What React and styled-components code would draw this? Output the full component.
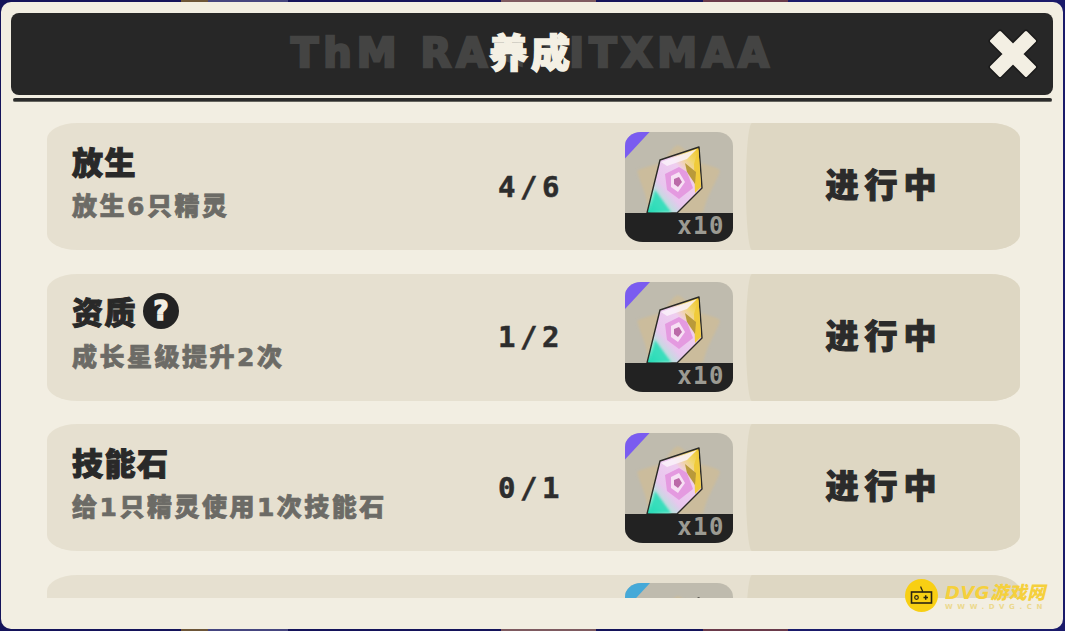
import React from "react";
import styled, { createGlobalStyle } from "styled-components";

const GlobalStyle = createGlobalStyle`
  html, body {
    margin: 0;
    height: 100%;
    overflow: hidden;
    background: #17165e;
  }
`;

const FONT = `"DejaVu Sans", "Noto Sans CJK SC", sans-serif`;
const MONO = `"DejaVu Sans Mono", monospace`;

const Page = styled.div`
  height: 631px;
  padding: 2px 2px 2px 1px;
  box-sizing: border-box;
  background: linear-gradient(
    90deg,
    #14135a 0 17%,
    #6d5638 17% 19.5%,
    #45457f 19.5% 27%,
    #14135a 27% 47%,
    #7e5a60 47% 56%,
    #14135a 56% 66%,
    #6a3a4a 66% 74%,
    #1a1a6a 74% 100%
  );
  font-family: ${FONT};
`;

const Panel = styled.div`
  position: relative;
  height: 627px;
  box-sizing: border-box;
  padding-top: 11px;
  display: flex;
  flex-direction: column;
  background: #f2eee2;
  border-radius: 10px;
  overflow: hidden;
`;

const Header = styled.div`
  position: relative;
  height: 82px;
  margin: 0 10px;
  flex: none;
  display: grid;
  grid-template-columns: 1fr auto 1fr;
  align-items: center;
  background: #272727;
  border-radius: 8px;
`;

const Runes = styled.div`
  position: absolute;
  top: 17px;
  left: 280px;
  width: 482px;
  text-align: center;
  font-size: 40px;
  line-height: 46px;
  font-weight: 700;
  letter-spacing: 5px;
  white-space: nowrap;
  color: #444443;
  -webkit-text-stroke: 2.5px #444443;
`;

const Title = styled.h1`
  position: relative;
  grid-column: 2;
  margin: 0 0 0 -2px;
  font-size: 39px;
  line-height: 82px;
  font-weight: 900;
  letter-spacing: 3px;
  color: #f4f0e4;
  -webkit-text-stroke: 1.5px #f4f0e4;
`;

const Close = styled.button`
  grid-column: 3;
  justify-self: end;
  width: 50px;
  height: 50px;
  margin-right: 15.5px;
  padding: 0;
  border: 0;
  background: none;
  display: block;
`;

const Divider = styled.div`
  flex: none;
  height: 4px;
  margin: 3px 11px 0 12px;
  border-radius: 2px;
  background: #2b2b2b;
  border-bottom: 1px solid #66665f;
  box-sizing: border-box;
`;

const List = styled.div`
  flex: none;
  height: 496px;
  margin: 0 43px 0 46px;
  padding-top: 21px;
  box-sizing: border-box;
  overflow: hidden;
  display: flex;
  flex-direction: column;
  gap: 23.5px;
`;

const Row = styled.div`
  flex: none;
  height: 127px;
  display: flex;
  align-items: stretch;
  background: #e6e0d0;
  border-radius: 30px / 16px;
  overflow: hidden;
`;

const Info = styled.div`
  width: 390px;
  padding: 19px 0 0 25px;
  box-sizing: border-box;
`;

const Name = styled.div`
  display: flex;
  align-items: center;
  gap: 6px;
  height: 36px;
  font-size: 31px;
  font-weight: 900;
  letter-spacing: 1.5px;
  color: #292929;
  -webkit-text-stroke: 1px #292929;
`;

const Help = styled.span`
  width: 36px;
  height: 36px;
  border-radius: 50%;
  background: #232323;
  color: #f2eee2;
  display: flex;
  align-items: center;
  justify-content: center;
  font-size: 26px;
  font-weight: 900;
  letter-spacing: 0;
  -webkit-text-stroke: 1.5px #f2eee2;
`;

const Desc = styled.div`
  margin-top: 12px;
  font-size: 25px;
  line-height: 34px;
  font-weight: 900;
  letter-spacing: 2.5px;
  white-space: nowrap;
  color: #6c6b66;
  -webkit-text-stroke: 0.7px #6c6b66;
`;

const Count = styled.div`
  width: 188px;
  display: flex;
  align-items: center;
  justify-content: center;
  box-sizing: border-box;
  font-family: ${MONO};
  font-size: 29px;
  font-weight: 700;
  letter-spacing: 4.5px;
  color: #2d2d2d;
  -webkit-text-stroke: 0.5px #2d2d2d;
`;

const Tile = styled.div`
  position: relative;
  flex: none;
  align-self: center;
  width: 108px;
  height: 110px;
  display: flex;
  flex-direction: column;
  justify-content: flex-end;
  background: #bfbbae;
  border-radius: 16px 16px 18px 18px / 14px 14px 14px 14px;
  overflow: hidden;
`;

const Corner = styled.span`
  position: absolute;
  top: 0;
  left: 0;
  width: 25px;
  height: 27px;
  background: ${(p) => p.$color};
  clip-path: polygon(0 0, 100% 0, 0 100%);
`;

const Gem = styled.svg`
  position: absolute;
  top: 0;
  left: 0;
  width: 108px;
  height: 81px;
`;

const Amount = styled.div`
  position: relative;
  height: 29px;
  padding-right: 8px;
  background: #222222;
  text-align: right;
  font-family: ${MONO};
  font-size: 24px;
  line-height: 27px;
  font-weight: 700;
  letter-spacing: 1.5px;
  color: #9b9a92;
`;

const Action = styled.div`
  flex: 1;
  margin-left: 13px;
  padding: 0 2px 7px 4px;
  display: flex;
  align-items: center;
  justify-content: center;
  background: #ded7c3;
  border-radius: 6px 0 0 6px / 60px 0 0 60px;
  font-size: 33px;
  font-weight: 900;
  letter-spacing: 6px;
  color: #2b2b2b;
  -webkit-text-stroke: 1.1px #2b2b2b;
`;

const Watermark = styled.div`
  position: absolute;
  left: 904px;
  top: 577px;
  display: flex;
  align-items: center;
  gap: 7px;
`;

const Badge = styled.svg`
  width: 33px;
  height: 33px;
  display: block;
`;

const MarkText = styled.div`
  display: flex;
  flex-direction: column;
`;

const MarkName = styled.div`
  margin-top: 2px;
  font-size: 18px;
  line-height: 21px;
  font-weight: 900;
  font-style: italic;
  letter-spacing: 0.5px;
  white-space: nowrap;
  color: #f5d03c;
`;

const MarkUrl = styled.div`
  font-size: 7px;
  line-height: 9px;
  font-weight: 700;
  letter-spacing: 4.6px;
  white-space: nowrap;
  color: #ecd98e;
`;

const CrystalArt = ({ id }) => (
  <Gem viewBox="0 0 108 81">
    <defs>
      <linearGradient id={`body${id}`} x1="0.05" y1="1" x2="0.95" y2="0.05">
        <stop offset="0" stopColor="#22d8b4" />
        <stop offset="0.16" stopColor="#a8ecd6" />
        <stop offset="0.36" stopColor="#e8c6ee" />
        <stop offset="0.66" stopColor="#efcdf0" />
        <stop offset="0.84" stopColor="#f1d870" />
        <stop offset="1" stopColor="#efc72a" />
      </linearGradient>
      <filter id={`soft${id}`}>
        <feGaussianBlur stdDeviation="1.2" />
      </filter>
    </defs>
    <path
      d="M53 13 C62 17 66 27 70 30 C84 33 95 36 95 39 C92 50 82 62 78 81 L24 81 C22 62 14 48 12 39 C15 36 30 33 38 30 C42 26 46 15 53 13 Z"
      fill="#cbbc9c"
      filter={`url(#soft${id})`}
    />
    <path
      d="M74 15 L77 56 L52 81 L22 81 L35 28 Z"
      fill={`url(#body${id})`}
      stroke="#2b2a26"
      strokeWidth="1.4"
      strokeLinejoin="round"
    />
    <path d="M73.5 17 L76 55 L70 61 L69 32 Z" fill="#f0cb3a" />
    <path d="M60 31 L71 40 L70 52 L62 40 Z" fill="#b99a3a" />
    <path d="M36 30 L72 17 L62 27 L42 34 Z" fill="#faf2fa" opacity="0.85" />
    <path d="M40 42 L54 35 L62 40 L68 56 L54 67 L42 58 Z" fill="#e49ae0" />
    <path d="M46 44 L54 40 L60 50 L53 60 L46 55 Z" fill="#f7e0f4" />
    <path d="M49 47 L54 45 L57 50 L53 55 L49 52 Z" fill="#bb6aa8" />
    <path d="M24 80 L30 58 L46 80 Z" fill="#26dcb8" opacity="0.85" filter={`url(#soft${id})`} />
  </Gem>
);

const tasks = [
  { name: "放生", desc: "放生6只精灵", count: "4/6", color: "#7a5cf0" },
  { name: "资质", help: true, desc: "成长星级提升2次", count: "1/2", color: "#7a5cf0" },
  { name: "技能石", desc: "给1只精灵使用1次技能石", count: "0/1", color: "#7a5cf0" },
  { color: "#46a9d8" },
];

export default function App() {
  return (
    <Page>
      <GlobalStyle />
      <Panel>
        <Header>
          <Runes>ThM RA&lt;&lt;ITXMAA</Runes>
          <Title>养成</Title>
          <Close aria-label="关闭">
            <svg viewBox="0 0 50 50" width="50" height="50">
              <polygon
                points="25,16.5 38,3.5 46.5,12 33.5,25 46.5,38 38,46.5 25,33.5 12,46.5 3.5,38 16.5,25 3.5,12 12,3.5"
                fill="#f3efe3"
                stroke="#1b1b1b"
                strokeWidth="6"
                strokeLinejoin="round"
              />
              <polygon
                points="25,16.5 38,3.5 46.5,12 33.5,25 46.5,38 38,46.5 25,33.5 12,46.5 3.5,38 16.5,25 3.5,12 12,3.5"
                fill="#f3efe3"
                stroke="#f3efe3"
                strokeWidth="3"
                strokeLinejoin="round"
              />
            </svg>
          </Close>
        </Header>
        <Divider />
        <List>
          {tasks.map((t, i) => (
            <Row key={i}>
              <Info>
                <Name>
                  {t.name}
                  {t.help && <Help>?</Help>}
                </Name>
                <Desc>{t.desc}</Desc>
              </Info>
              <Count>{t.count}</Count>
              <Tile>
                <CrystalArt id={i} />
                <Corner $color={t.color} />
                {t.name && <Amount>x10</Amount>}
              </Tile>
              <Action>{t.name && "进行中"}</Action>
            </Row>
          ))}
        </List>
        <Watermark>
          <Badge viewBox="0 0 33 33">
            <circle cx="16.5" cy="16.5" r="16.5" fill="#f8cf13" />
            <rect x="6.5" y="13" width="20" height="11" fill="none" stroke="#2a2413" strokeWidth="1.6" />
            <path d="M17 13 C19 11 15 9.5 16 7.5" fill="none" stroke="#2a2413" strokeWidth="1.3" />
            <circle cx="11.5" cy="18.5" r="1.8" fill="none" stroke="#2a2413" strokeWidth="1.2" />
            <path d="M18.5 18.5 H23 M20.7 16.3 V20.7" stroke="#2a2413" strokeWidth="1.5" />
          </Badge>
          <MarkText>
            <MarkName>DVG游戏网</MarkName>
            <MarkUrl>WWW.DVG.CN</MarkUrl>
          </MarkText>
        </Watermark>
      </Panel>
    </Page>
  );
}
